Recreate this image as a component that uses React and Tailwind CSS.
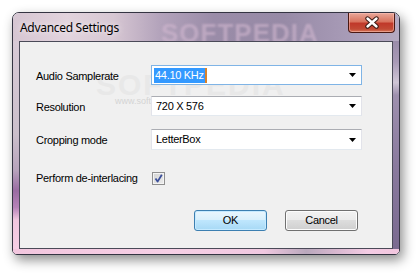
import React from 'react'

const ui = { fontFamily: '"Liberation Sans", Arial, sans-serif' }
const title = { fontFamily: '"Noto Sans", "Open Sans", sans-serif' }

function ComboArrow() {
  return (
    <svg width="7" height="4" viewBox="0 0 7 4" className="shrink-0">
      <polygon points="0,0 7,0 3.5,4" fill="#000" />
    </svg>
  )
}

function Combo({ children, focused, tall }) {
  return (
    <div
      className={`w-[211px] ${tall ? 'h-[21px]' : 'h-[20px]'} bg-white flex items-center pr-[5px] border ${
        focused
          ? 'border-[#7fb4e6]'
          : 'border-t-[#abadb3] border-x-[#e2e3ea] border-b-[#e3e9ef]'
      }`}
    >
      <div className="flex-1 min-w-0 flex items-center">{children}</div>
      <ComboArrow />
    </div>
  )
}

function Row({ label, className, children }) {
  return (
    <div className={`flex items-center ${className}`}>
      <span className="w-[115px] pt-[2px] text-[11px] tracking-[-0.3px] text-black">{label}</span>
      {children}
    </div>
  )
}

function Button({ children, primary }) {
  return (
    <button
      className={`w-[73px] h-[21px] rounded-[3px] border text-[11px] tracking-[-0.3px] text-black flex items-center justify-center ${
        primary
          ? 'border-[#3c7fb1] bg-[linear-gradient(to_bottom,#eaf6fd_0%,#d9f0fc_45%,#bee6fd_50%,#a7d9f5_100%)] shadow-[inset_0_0_0_1px_#c6eaff]'
          : 'border-[#707070] bg-[linear-gradient(to_bottom,#f2f2f2_0%,#ebebeb_45%,#dddddd_50%,#cfcfcf_100%)] shadow-[inset_0_0_0_1px_#fcfcfc]'
      }`}
    >
      {children}
    </button>
  )
}

export default function App() {
  return (
    <div className="w-[420px] h-[275px] bg-white pt-[12px] pl-[12px] overflow-hidden" style={ui}>
      <div className="relative w-[388px] h-[243px] flex flex-col border border-[#343442] rounded-t-[7px] rounded-b-[5px] overflow-hidden shadow-[3px_5px_12px_rgba(0,0,0,0.45)]">
        {/* title bar */}
        <div className="relative h-[28px] shrink-0 flex items-start bg-[linear-gradient(to_right,#d6c6d2_0%,#e2d3dd_14%,#d7c7d3_26%,#b3a3bb_38%,#9a8ca8_52%,#978aa6_70%,#a598b4_84%,#b4aac2_100%)]">
          <span className="absolute left-[148px] top-[1px] text-[26px] font-bold tracking-[1px] text-[#d2b8d0] opacity-60 blur-[1px] select-none" style={ui}>
            SOFTPEDIA
          </span>
          <span
            className="relative h-[28px] flex items-center pl-[7px] pt-[2px] text-[12px] tracking-[-0.3px] text-black [text-shadow:0_0_6px_rgba(255,255,255,0.9)]"
            style={title}
          >
            Advanced Settings
          </span>
          <div className="relative ml-auto mr-[4px] w-[47px] h-[20px] rounded-b-[4px] border border-t-0 border-[#4a1812] bg-[linear-gradient(to_bottom,#e9a89a_0%,#d9745f_45%,#c0392a_55%,#c24a35_85%,#d77a5c_100%)] shadow-[inset_0_0_0_1px_rgba(255,200,190,0.5)] flex items-center justify-center">
            <svg width="16" height="13" viewBox="0 0 16 13">
              <path d="M3.5 2.5 L12.5 10.5 M12.5 2.5 L3.5 10.5" stroke="#3a1a14" strokeWidth="4.4" strokeLinecap="round" />
              <path d="M3.5 2.5 L12.5 10.5 M12.5 2.5 L3.5 10.5" stroke="#fff" strokeWidth="2.4" strokeLinecap="round" />
            </svg>
          </div>
        </div>

        {/* frame sides + client */}
        <div className="flex flex-1 min-h-0">
          <div className="w-[6px] shrink-0 bg-[linear-gradient(to_bottom,#d8cad6_0%,#cbbfcb_45%,#b8a4bc_62%,#9a6ca2_72%,#b682b8_80%,#f0c6de_86%,#f6cfe5_100%)]" />
          <div className="relative w-[374px] h-[208px] border border-[#4a4a58] bg-[#f0f0f0] pt-[23px] pl-[16px] flex flex-col">
            {/* faint watermark */}
            <span className="absolute left-[76px] top-[20px] text-[30px] font-bold tracking-[2px] text-[#e8e8e8] select-none">
              SOFTPEDIA
            </span>
            <span className="absolute left-[95px] top-[53px] text-[9px] text-[#d4d4d4] select-none">www.softpedia.com</span>

            <Row label="Audio Samplerate" className="relative">
              <Combo focused>
                <span className="ml-[2px] bg-[#3399ff] text-white text-[11px] tracking-[-0.3px] leading-[15px] px-[1px]">
                  44.10 KHz
                </span>
                <span className="w-[2px] h-[15px] bg-[#d9822b]" />
              </Combo>
            </Row>
            <Row label="Resolution" className="relative mt-[11px]">
              <Combo>
                <span className="ml-[4px] text-[11px] tracking-[-0.3px] text-black">720 X 576</span>
              </Combo>
            </Row>
            <Row label="Cropping mode" className="relative mt-[13px]">
              <Combo tall>
                <span className="ml-[4px] text-[11px] tracking-[-0.3px] text-black">LetterBox</span>
              </Combo>
            </Row>
            <div className="relative flex items-center mt-[20px]">
              <span className="w-[116px] text-[11px] tracking-[-0.3px] text-black">Perform de-interlacing</span>
              <div className="w-[13px] h-[13px] border border-[#8f8f8f] bg-[linear-gradient(to_bottom_right,#d4d4d4,#ececec)] shadow-[inset_0_0_0_1px_#f4f4f4] flex items-center justify-center">
                <svg width="11" height="11" viewBox="0 0 11 11">
                  <path d="M2.5 5.5 L4.6 8.6 L8.8 1.8" fill="none" stroke="#3b4f9a" strokeWidth="1.8" strokeLinejoin="round" />
                </svg>
              </div>
            </div>
            <div className="relative flex justify-end gap-[18px] pr-[34px] mt-[23px]">
              <Button primary>OK</Button>
              <Button>Cancel</Button>
            </div>
          </div>
          <div className="w-[6px] shrink-0 bg-[linear-gradient(to_bottom,#9a8caa_0%,#a89ab6_10%,#cfc6d6_20%,#9e90ae_26%,#8a7a9e_60%,#7a6a90_100%)]" />
        </div>
        <div className="h-[5px] shrink-0 bg-[linear-gradient(to_right,#f2c6de_0%,#f6cfe5_40%,#f0c8e0_65%,#b9a8bc_76%,#d9b8d0_84%,#f4cce4_92%,#f2c6de_100%)]" />
      </div>
    </div>
  )
}
